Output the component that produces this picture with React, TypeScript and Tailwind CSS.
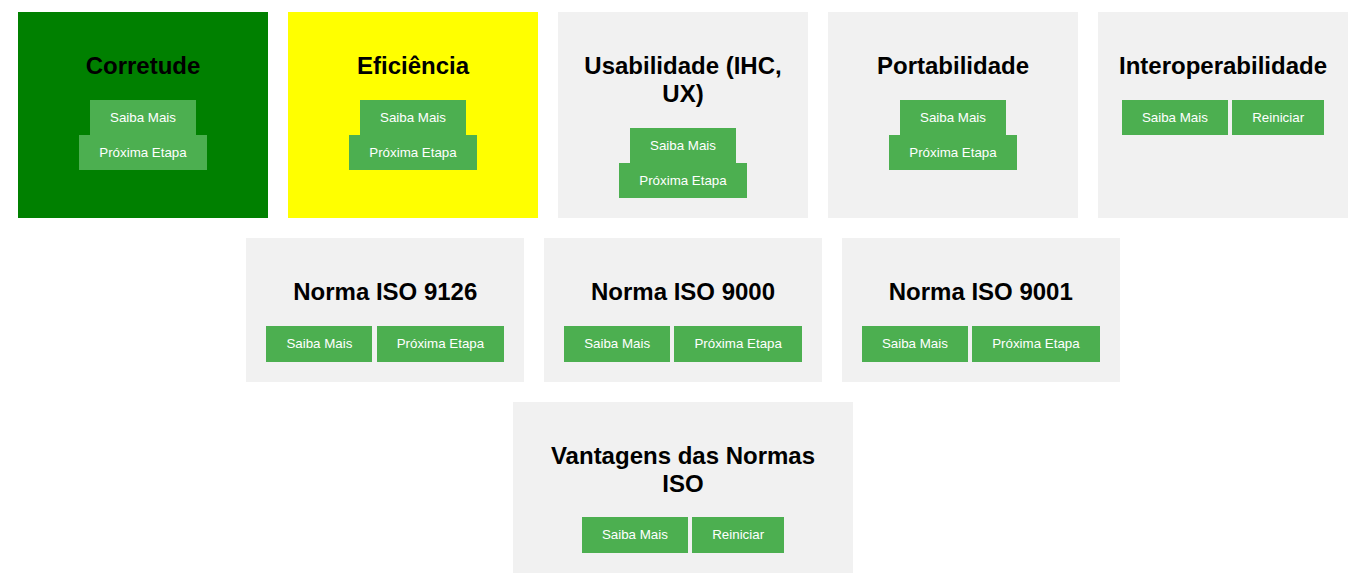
import React from "react";

type Card = {
    title: string;
    bg?: string;
    second: string;
};

const rowOne: Card[] = [
    { title: "Corretude", bg: "bg-[#008000]", second: "Próxima Etapa" },
    { title: "Eficiência", bg: "bg-[#ffff00]", second: "Próxima Etapa" },
    { title: "Usabilidade (IHC, UX)", second: "Próxima Etapa" },
    { title: "Portabilidade", second: "Próxima Etapa" },
    { title: "Interoperabilidade", second: "Reiniciar" },
];

const rowTwo: Card[] = [
    { title: "Norma ISO 9126", second: "Próxima Etapa" },
    { title: "Norma ISO 9000", second: "Próxima Etapa" },
    { title: "Norma ISO 9001", second: "Próxima Etapa" },
];

function Button({ label }: { label: string }) {
    return (
        <button
            type="button"
            className="bg-[#4caf50] text-white px-5 py-[10px] text-[13.33px] leading-[15.33px] cursor-pointer"
        >
            {label}
        </button>
    );
}

function TopicCard({ card, width }: { card: Card; width?: string }) {
    return (
        <div className={`${card.bg ?? "bg-[#f1f1f1]"} ${width ?? ""} p-5 text-center`}>
            <h2 className="text-[24px] leading-[28px] font-bold text-black my-[19.92px]">
                {card.title}
            </h2>
            <div className="flex flex-wrap justify-center gap-x-[4.4px]">
                <Button label="Saiba Mais" />
                <Button label={card.second} />
            </div>
        </div>
    );
}

export default function App() {
    return (
        <div
            className="min-h-screen bg-white flex flex-col items-center gap-5 pt-[12px] pl-[2px]"
            style={{ fontFamily: '"Liberation Sans", Arial, sans-serif' }}
        >
            <div className="flex gap-5">
                {rowOne.map((c) => (
                    <TopicCard key={c.title} card={c} width="w-[250px]" />
                ))}
            </div>
            <div className="flex gap-5">
                {rowTwo.map((c) => (
                    <TopicCard key={c.title} card={c} />
                ))}
            </div>
            <div className="flex">
                <TopicCard
                    card={{ title: "Vantagens das Normas ISO", second: "Reiniciar" }}
                    width="w-[340px]"
                />
            </div>
        </div>
    );
}
